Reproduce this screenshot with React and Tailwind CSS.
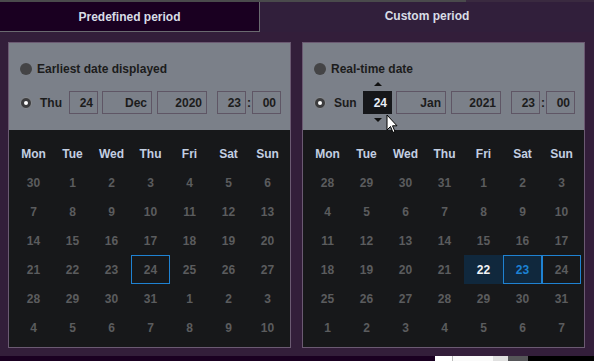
import React from "react";

const font = { fontFamily: '"Liberation Sans", Arial, sans-serif' };

function Radio({ checked }) {
  return checked ? (
    <span className="w-[12px] h-[12px] rounded-full bg-[#3c3c3e] border border-[#8a8d92] flex items-center justify-center shrink-0">
      <span className="w-[4px] h-[4px] rounded-full bg-white" />
    </span>
  ) : (
    <span className="w-[12px] h-[12px] rounded-full bg-[#444446] shrink-0" />
  );
}

function Box({ w, children, active }) {
  return (
    <div
      className={
        "h-[23px] border flex items-center justify-end pr-[4px] text-[12px] font-bold " +
        (active
          ? "bg-[#16171a] border-[#16171a] text-[#e8eef8]"
          : "bg-transparent border-[#5f5665] text-[#1c1c1c]")
      }
      style={{ width: w }}
    >
      {children}
    </div>
  );
}

const HEAD = ["Mon", "Tue", "Wed", "Thu", "Fri", "Sat", "Sun"];

function Calendar({ days, special }) {
  return (
    <div className="bg-[#17181a] flex-1 px-[5px] pt-[9px]">
      <div className="grid grid-cols-[repeat(7,39px)]">
        {HEAD.map((h) => (
          <div key={h} className="h-[29px] flex items-center justify-center text-[12px] font-bold text-[#c3cfe2]">
            {h}
          </div>
        ))}
        {days.map((d, i) => {
          const s = special[i];
          let cls = "text-[#5b5c5e]";
          if (s === "today") cls = "bg-[#10283d] text-[#f2f4f6]";
          if (s === "sel") cls = "bg-[#10283d] border border-[#1f82d2] text-[#1c82d4]";
          if (s === "outline") cls = "border border-[#1f82d2] text-[#5b5c5e]";
          return (
            <div key={i} className={"h-[29px] flex items-center justify-center text-[12px] font-bold " + cls}>
              {d}
            </div>
          );
        })}
      </div>
    </div>
  );
}

function Panel({ label, day, dd, mon, yr, hh, mm, days, special, active }) {
  return (
    <div className="w-[283px] h-[306px] border border-[#6b5a72] flex flex-col">
      <div className="h-[87px] bg-[#7b8089] pl-[11px] pt-[16px] relative">
        <div className="flex items-center h-[20px] gap-[5px]">
          <Radio />
          <span className="text-[12px] font-bold text-[#1c1c1c]">{label}</span>
        </div>
        <div className="flex items-center mt-[12px] h-[23px]">
          <Radio checked />
          <span className="text-[12px] font-bold text-[#1c1c1c] ml-[8px] w-[29px]">{day}</span>
          <div className="relative">
            <Box w={29} active={active}>{dd}</Box>
            {active && (
              <>
                <span className="absolute left-[11px] top-[-9px] w-0 h-0 border-l-[4px] border-r-[4px] border-b-[4px] border-l-transparent border-r-transparent border-b-[#111]" />
                <span className="absolute left-[11px] bottom-[-8px] w-0 h-0 border-l-[4px] border-r-[4px] border-t-[4px] border-l-transparent border-r-transparent border-t-[#111]" />
              </>
            )}
          </div>
          <div className="ml-[4px]"><Box w={50}>{mon}</Box></div>
          <div className="ml-[5px]"><Box w={50}>{yr}</Box></div>
          <div className="ml-[10px]"><Box w={29}>{hh}</Box></div>
          <span className="text-[12px] font-bold text-[#1c1c1c] w-[6px] text-center">:</span>
          <Box w={29}>{mm}</Box>
        </div>
      </div>
      <Calendar days={days} special={special} />
    </div>
  );
}

const leftDays = [
  30, 1, 2, 3, 4, 5, 6, 7, 8, 9, 10, 11, 12, 13, 14, 15, 16, 17, 18, 19, 20, 21, 22, 23, 24, 25, 26, 27, 28, 29, 30, 31, 1, 2, 3, 4, 5, 6, 7, 8, 9, 10,
];
const rightDays = [
  28, 29, 30, 31, 1, 2, 3, 4, 5, 6, 7, 8, 9, 10, 11, 12, 13, 14, 15, 16, 17, 18, 19, 20, 21, 22, 23, 24, 25, 26, 27, 28, 29, 30, 31, 1, 2, 3, 4, 5, 6, 7,
];

export default function App() {
  return (
    <div className="w-[594px] h-[361px] bg-[#331e3a] flex flex-col overflow-hidden relative" style={font}>
      <div className="h-[2px] flex">
        <div className="w-[466px] bg-[#4a4a4c]" />
        <div className="flex-1 bg-[#3a2a40]" />
      </div>
      <div className="flex h-[30px]">
        <div className="w-[260px] bg-[#1a0021] border-r border-b border-[#6a6a70] flex items-center justify-center text-[12px] font-bold text-[#d8dde6] pt-[1px]">
          Predefined period
        </div>
        <div className="flex-1 bg-[#311f3b] flex items-center justify-center text-[12px] font-bold text-[#d8dde6] pb-[2px]">
          Custom period
        </div>
      </div>
      <div className="flex gap-[11px] pl-[8px] pt-[10px]">
        <Panel
          label="Earliest date displayed"
          day="Thu"
          dd="24"
          mon="Dec"
          yr="2020"
          hh="23"
          mm="00"
          days={leftDays}
          special={{ 24: "outline" }}
        />
        <Panel
          label="Real-time date"
          day="Sun"
          dd="24"
          mon="Jan"
          yr="2021"
          hh="23"
          mm="00"
          active
          days={rightDays}
          special={{ 25: "today", 26: "sel", 27: "outline" }}
        />
      </div>
      <div className="mt-auto h-[5px] flex">
        <div className="w-[435px] bg-[#1a0021]" />
        <div className="w-[18px] bg-[#ffffff] border-r border-[#bbb]" />
        <div className="w-[40px] bg-[#fafafa]" />
        <div className="w-[15px] bg-[#e0e0e0]" />
        <div className="w-[20px] bg-[#555558]" />
        <div className="flex-1 bg-black" />
      </div>
      <svg className="absolute left-[386px] top-[114px]" width="13" height="20" viewBox="0 0 13 20">
        <path d="M1 1 L1 16 L4.5 12.5 L7 18.5 L9 17.5 L6.5 11.8 L11 11.8 Z" fill="#fff" stroke="#000" strokeWidth="1" strokeLinejoin="round" />
      </svg>
    </div>
  );
}
